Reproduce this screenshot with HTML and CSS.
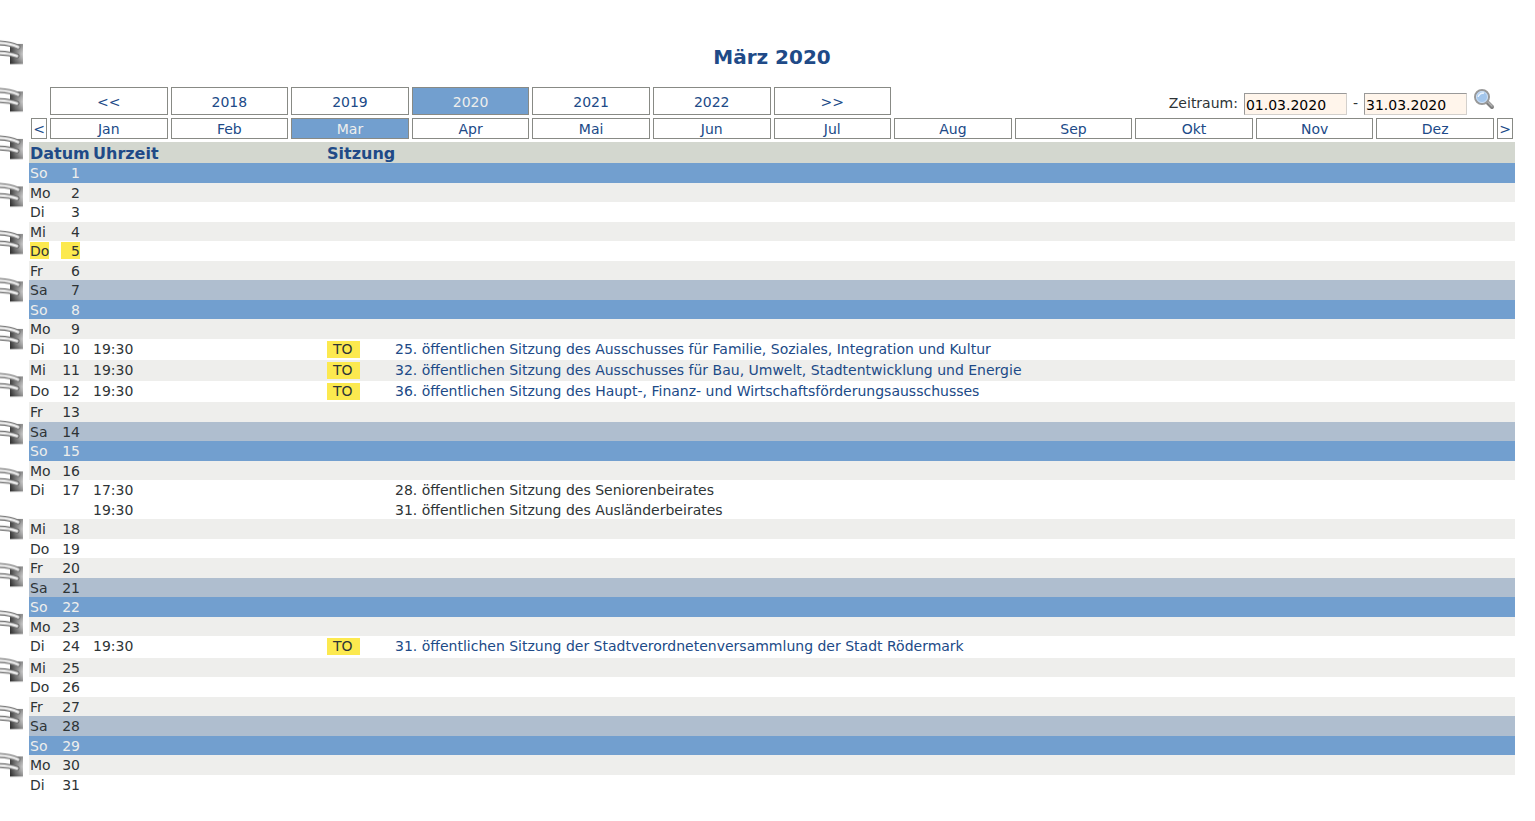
FILE: index.html
```
<!DOCTYPE html>
<html lang="de">
<head>
<meta charset="utf-8">
<title>März 2020</title>
<link rel="stylesheet" href="styles.css">
</head>
<body>
<svg class="spiral" width="26" height="821" aria-hidden="true">
  <defs>
    <linearGradient id="hole" x1="0" x2="1" y1="0" y2="0">
      <stop offset="0" stop-color="#2a2a2a"/><stop offset=".4" stop-color="#777"/><stop offset="1" stop-color="#d4d4d4"/>
    </linearGradient>
    <linearGradient id="shade" x1="0" x2="0" y1="0" y2="1">
      <stop offset="0" stop-color="#444" stop-opacity=".5"/><stop offset=".5" stop-color="#888" stop-opacity=".1"/><stop offset="1" stop-color="#222" stop-opacity=".4"/>
    </linearGradient>
    <pattern id="ring" width="26" height="47.5" y="36" patternUnits="userSpaceOnUse">
      <rect x="10" y="8" width="13" height="20" fill="url(#hole)"/>
      <rect x="10" y="8" width="13" height="20" fill="url(#shade)"/>
      <g fill="none" stroke-linecap="round">
        <path d="M-2 7Q9 7 18 11" stroke="#777" stroke-width="5"/>
        <path d="M-2 7Q9 7 18 11" stroke="#d0d0d0" stroke-width="3"/>
        <path d="M-2 7Q9 7 18 11" stroke="#fff" stroke-width="1"/>
        <path d="M-2 17Q9 17 17 20" stroke="#666" stroke-width="5"/>
        <path d="M-2 17Q9 17 17 20" stroke="#ccc" stroke-width="3"/>
        <path d="M-2 17Q9 17 17 20" stroke="#fff" stroke-width="1"/>
      </g>
    </pattern>
  </defs>
  <rect y="36" width="26" height="760" fill="url(#ring)"/>
</svg>
<main class="calendar">
  <h1>März 2020</h1>
  <div class="controls">
    <nav class="grid years" aria-label="Jahr">
      <a class="prev" href="#">&lt;&lt;</a><a href="#">2018</a><a href="#">2019</a><a href="#" class="active">2020</a><a href="#">2021</a><a href="#">2022</a><a href="#">&gt;&gt;</a>
      <form class="period">
        <label for="from">Zeitraum:</label>
        <input id="from" type="text" value="01.03.2020">
        <label for="to">-</label>
        <input id="to" type="text" value="31.03.2020">
        <button type="submit" aria-label="Suchen">
          <svg width="22" height="22" viewBox="0 0 22 22">
            <path d="M14 14l5 5" stroke="#808080" stroke-width="4" stroke-linecap="round"/>
            <path d="M14 13l5 5" stroke="#b0b0b0" stroke-width="1.5" stroke-linecap="round"/>
            <circle cx="9" cy="9" r="7" fill="#a3c6ec" stroke="#999" stroke-width="2"/>
            <circle cx="9" cy="9" r="5.500" fill="none" stroke="#cfe0f4"/>
            <path d="M5 9q1-5 6-4q-4 0-6 4" fill="#eef6ff" stroke="#eef6ff"/>
          </svg>
        </button>
      </form>
    </nav>
    <nav class="grid months" aria-label="Monat">
      <a href="#">&lt;</a><a href="#">Jan</a><a href="#">Feb</a><a href="#" class="active">Mar</a><a href="#">Apr</a><a href="#">Mai</a><a href="#">Jun</a><a href="#">Jul</a><a href="#">Aug</a><a href="#">Sep</a><a href="#">Okt</a><a href="#">Nov</a><a href="#">Dez</a><a href="#">&gt;</a>
    </nav>
  </div>
  <table>
    <colgroup><col class="c-day"><col class="c-num"><col class="c-time"><col class="c-to"><col></colgroup>
    <thead><tr><th colspan="2">Datum</th><th>Uhrzeit</th><th colspan="2">Sitzung</th></tr></thead>
    <tbody>
      <tr class="sun"><td>So</td><td class="n"><span>1</span></td><td colspan="3"></td></tr>
      <tr class="alt"><td>Mo</td><td class="n"><span>2</span></td><td colspan="3"></td></tr>
      <tr><td>Di</td><td class="n"><span>3</span></td><td colspan="3"></td></tr>
      <tr class="alt"><td>Mi</td><td class="n"><span>4</span></td><td colspan="3"></td></tr>
      <tr class="today"><td><span>Do</span></td><td class="n"><span>5</span></td><td colspan="3"></td></tr>
      <tr class="alt"><td>Fr</td><td class="n"><span>6</span></td><td colspan="3"></td></tr>
      <tr class="sat"><td>Sa</td><td class="n"><span>7</span></td><td colspan="3"></td></tr>
      <tr class="sun"><td>So</td><td class="n"><span>8</span></td><td colspan="3"></td></tr>
      <tr class="alt"><td>Mo</td><td class="n"><span>9</span></td><td colspan="3"></td></tr>
      <tr class="agenda"><td>Di</td><td class="n"><span>10</span></td><td>19:30</td><td><a class="to" href="#">TO</a></td><td><a href="#">25. öffentlichen Sitzung des Ausschusses für Familie, Soziales, Integration und Kultur</a></td></tr>
      <tr class="agenda alt"><td>Mi</td><td class="n"><span>11</span></td><td>19:30</td><td><a class="to" href="#">TO</a></td><td><a href="#">32. öffentlichen Sitzung des Ausschusses für Bau, Umwelt, Stadtentwicklung und Energie</a></td></tr>
      <tr class="agenda"><td>Do</td><td class="n"><span>12</span></td><td>19:30</td><td><a class="to" href="#">TO</a></td><td><a href="#">36. öffentlichen Sitzung des Haupt-, Finanz- und Wirtschaftsförderungsausschusses</a></td></tr>
      <tr class="alt"><td>Fr</td><td class="n"><span>13</span></td><td colspan="3"></td></tr>
      <tr class="sat"><td>Sa</td><td class="n"><span>14</span></td><td colspan="3"></td></tr>
      <tr class="sun"><td>So</td><td class="n"><span>15</span></td><td colspan="3"></td></tr>
      <tr class="alt"><td>Mo</td><td class="n"><span>16</span></td><td colspan="3"></td></tr>
      <tr><td>Di</td><td class="n"><span>17</span></td><td>17:30</td><td></td><td>28. öffentlichen Sitzung des Seniorenbeirates</td></tr>
      <tr><td></td><td></td><td>19:30</td><td></td><td>31. öffentlichen Sitzung des Ausländerbeirates</td></tr>
      <tr class="alt"><td>Mi</td><td class="n"><span>18</span></td><td colspan="3"></td></tr>
      <tr><td>Do</td><td class="n"><span>19</span></td><td colspan="3"></td></tr>
      <tr class="alt"><td>Fr</td><td class="n"><span>20</span></td><td colspan="3"></td></tr>
      <tr class="sat"><td>Sa</td><td class="n"><span>21</span></td><td colspan="3"></td></tr>
      <tr class="sun"><td>So</td><td class="n"><span>22</span></td><td colspan="3"></td></tr>
      <tr class="alt"><td>Mo</td><td class="n"><span>23</span></td><td colspan="3"></td></tr>
      <tr class="agenda plenary"><td>Di</td><td class="n"><span>24</span></td><td>19:30</td><td><a class="to" href="#">TO</a></td><td><a href="#">31. öffentlichen Sitzung der Stadtverordnetenversammlung der Stadt Rödermark</a></td></tr>
      <tr class="alt"><td>Mi</td><td class="n"><span>25</span></td><td colspan="3"></td></tr>
      <tr><td>Do</td><td class="n"><span>26</span></td><td colspan="3"></td></tr>
      <tr class="alt"><td>Fr</td><td class="n"><span>27</span></td><td colspan="3"></td></tr>
      <tr class="sat"><td>Sa</td><td class="n"><span>28</span></td><td colspan="3"></td></tr>
      <tr class="sun"><td>So</td><td class="n"><span>29</span></td><td colspan="3"></td></tr>
      <tr class="alt"><td>Mo</td><td class="n"><span>30</span></td><td colspan="3"></td></tr>
      <tr><td>Di</td><td class="n"><span>31</span></td><td colspan="3"></td></tr>
    </tbody>
  </table>
</main>
</body>
</html>
```
FILE: styles.css
```
* { box-sizing: border-box; }
body {
  margin: 0;
  display: flex;
  font: 14px/17px Verdana, "DejaVu Sans", sans-serif;
  color: #2e3436;
  background: #fff;
}
a { color: #204a87; text-decoration: none; }
.spiral { flex: none; margin-right: 3px; }
.calendar { flex: 1; min-width: 0; padding: 45px 20px 0 0; }
h1 { margin: 0 0 17px; font-size: 20px; line-height: 25px; text-align: center; color: #204a87; }
.controls { padding: 0 2px; }
.grid { display: grid; grid-template-columns: 16px repeat(12, 1fr) 16px; column-gap: 3px; }
.grid a {
  display: flex;
  align-items: center;
  justify-content: center;
  padding-top: 2px;
  border: 1px solid #888a85;
}
.grid a.active { background: #729fcf; color: #eeeeec; }
.years a { height: 28px; }
.years .prev { grid-column: 2; }
.months { margin: 3px 0; }
.months a { height: 21px; }
.period {
  grid-column: 9 / -1;
  display: flex;
  justify-content: flex-end;
  align-items: center;
  gap: 6px;
  height: 28px;
  padding: 5px 18px 0 0;
}
.period input {
  width: 103px;
  height: 22px;
  padding: 2px 1px 0;
  border: 1px solid #d3d0cc;
  border-top-color: #999;
  border-left-color: #999;
  background: #fff5eb;
  color: #000;
  font: inherit;
}
.period button { width: 22px; height: 22px; padding: 0; border: 0; background: none; margin-bottom: 10px; }
.period svg { display: block; }
table { width: 100%; border-collapse: collapse; table-layout: fixed; }
.c-day { width: 31px; }
.c-num { width: 32px; }
.c-time { width: 234px; }
.c-to { width: 68px; }
th, td { padding: 0 1px; text-align: left; white-space: nowrap; }
th { height: 21px; padding-top: 2px; font-size: 16px; line-height: 19px; background: #d3d7cf; color: #204a87; }
td { padding-top: 2px; vertical-align: top; }
tbody tr { height: 19px; }
tbody tr:nth-child(odd) { height: 20px; }
tbody tr.agenda { height: 21px; }
tbody tr.plenary { height: 22px; }
.n span { display: inline-block; width: 19px; text-align: right; }
.alt { background: #eeeeec; }
.sat { background: #afbecf; }
.sun { background: #729fcf; color: #eeeeec; }
.today td { padding-top: 1px; }
.today span { display: inline-block; padding-top: 1px; line-height: 16px; background: #fce94f; }
.to { display: inline-block; padding: 0 7px 0 6px; background: #fce94f; color: #2e3436; }
```
